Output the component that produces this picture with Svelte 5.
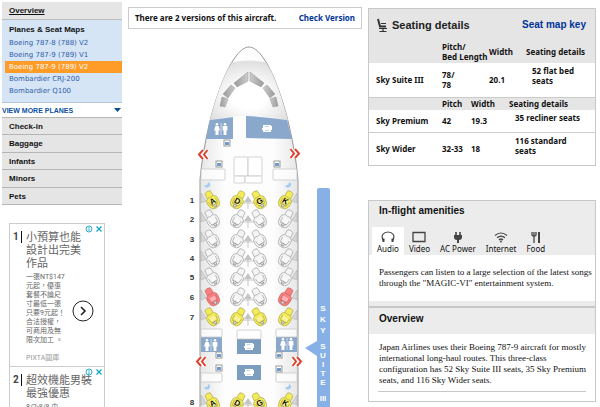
<script>
  const planes = [
    "Boeing 787-8 (788) V2",
    "Boeing 787-9 (789) V1",
    "Boeing 787-9 (789) V2",
    "Bombardier CRJ-200",
    "Bombardier Q100",
  ];
  let selectedPlane = $state(2);

  const links = ["Check-in", "Baggage", "Infants", "Minors", "Pets"];

  const tabs = ["Audio", "Video", "AC Power", "Internet", "Food"];
  let activeTab = $state("Audio");

  // seat colours: y = mixed, r = bad, w = standard
  const rows = [
    { n: 1, y: 200, seats: "yyyy", letters: true },
    { n: 2, y: 219, seats: "wwww" },
    { n: 3, y: 239, seats: "wwww" },
    { n: 4, y: 258, seats: "wwww" },
    { n: 5, y: 277, seats: "wwww" },
    { n: 6, y: 297, seats: "rwwr" },
    { n: 7, y: 317, seats: "yyyy" },
    { n: 8, y: 402, seats: "yyyy", letters: true },
  ];
  const columns = [
    { letter: "A", x: 212, flip: 1 },
    { letter: "D", x: 238, flip: -1 },
    { letter: "G", x: 259, flip: 1 },
    { letter: "K", x: 286, flip: -1 },
  ];

  const bassinets = [[224, 140], [216, 161], [274, 161], [216, 352], [276, 352], [216, 365], [276, 366]];
  const closets = [
    [201, 169, 24, 11], [273, 169, 24, 11],
    [234, 157, 14, 19], [248, 157, 14, 19], [234, 176, 11, 7], [245, 176, 17, 7],
    [201, 329, 21, 8], [276, 329, 21, 8], [237, 330, 24, 9],
    [201, 373, 21, 9], [276, 373, 21, 9],
  ];
  const crescents = [[204, 182], [285, 182], [204, 384], [285, 384]];
  const exits = [[198, 150, 1], [300, 149, -1], [196, 357, 1], [302, 357, -1]];
  const cabinLetters = [["S", 311], ["K", 322], ["Y", 333], ["S", 349], ["U", 358], ["I", 367], ["T", 376], ["E", 385], ["III", 401]];
</script>

{#snippet lavatory(x, y)}
  <g transform="translate({x} {y})" fill="#fff">
    <circle cx="3" cy="1.3" r="1.3" />
    <path d="M1.4 3h3.2L6 7.5H4.5V12h-3V7.5H0z" />
    <path d="M6.6 0h.9v12h-.9z" opacity=".6" />
    <circle cx="11" cy="1.3" r="1.3" />
    <path d="M8.6 3h4.8v4.5h-1V12H9.6V7.5h-1z" />
  </g>
{/snippet}

{#snippet galley(x, y)}
  <g transform="translate({x} {y})">
    <path d="M1 0h8v1h1v4H9v2H1V5H0V3h1z" fill="#fff" />
    <path d="M2.5 1.5h4M3 5.5h4" stroke="#9fb8d4" stroke-width=".6" />
  </g>
{/snippet}

{#snippet adIcons()}
  <svg class="ad-icons" viewBox="0 0 18 8" fill="none" stroke="#12a5c8" aria-hidden="true">
    <circle cx="4" cy="4" r="3" stroke-width=".9" />
    <path d="M4 3.4v2.4M4 2v.9" />
    <path d="M11.5 1.5l5 5M16.5 1.5l-5 5" stroke-width="1.3" />
  </svg>
{/snippet}

<div class="page">
  <aside>
    <nav>
      <a class="overview" href="#overview">Overview</a>
      <div class="planes">
        <h2>Planes & Seat Maps</h2>
        {#each planes as plane, i}
          <a
            href="#plane-{i}"
            class:selected={i === selectedPlane}
            onclick={() => (selectedPlane = i)}>{plane}</a>
        {/each}
      </div>
      <button class="more">
        VIEW MORE PLANES
        <svg viewBox="0 0 7 4" aria-hidden="true"><path d="M0 0h7L3.5 4z" fill="#0a4f8c" /></svg>
      </button>
      <div class="links">
        {#each links as link}
          <a href="#{link.toLowerCase()}">{link}</a>
        {/each}
      </div>
    </nav>

    <div class="ads">
      <article class="ad first">
        {@render adIcons()}
        <span class="num">1</span>
        <div class="copy">
          <h3>小預算也能<br />設計出完美<br />作品</h3>
          <p>一張NT$147<br />元起，優惠<br />套餐不論尺<br />寸最低一張<br />只要9元起！<br />合法授權，<br />可商用及無<br />限次加工 。</p>
          <small>PIXTA圖庫</small>
        </div>
        <button class="go" aria-label="PIXTA">
          <svg viewBox="0 0 22 22" fill="none" stroke="#222">
            <circle cx="11" cy="11" r="10" />
            <path d="M9 7l4 4-4 4" stroke-width="1.6" />
          </svg>
        </button>
      </article>
      <article class="ad">
        {@render adIcons()}
        <span class="num">2</span>
        <div class="copy">
          <h3>超效機能男裝<br />最強優惠</h3>
          <p>8/2-8/8 由</p>
        </div>
      </article>
    </div>
  </aside>

  <main>
    <div class="version">
      <span>There are 2 versions of this aircraft.</span>
      <a href="#version">Check Version</a>
    </div>

    <svg class="map" viewBox="128 40 234 367" role="img" aria-label="Seat map">
      <defs>
        <linearGradient id="hull">
          <stop offset="0" stop-color="#e6e6e6" />
          <stop offset=".25" stop-color="#fdfdfd" />
          <stop offset=".75" stop-color="#fdfdfd" />
          <stop offset="1" stop-color="#e6e6e6" />
        </linearGradient>
        <radialGradient id="nose" cx=".5" cy=".6" r=".62">
          <stop offset=".35" stop-color="#fff" />
          <stop offset="1" stop-color="#dedede" />
        </radialGradient>
        <linearGradient id="glass">
          <stop offset="0" stop-color="#999" />
          <stop offset="1" stop-color="#ccc" />
        </linearGradient>
      </defs>

      <path
        d="M200 410V180C201 165 206 135 212 113C218 92 226 70 234 59C240 50 245 47 249 47C253 47 258 50 264 59C272 70 280 92 286 113C292 135 297 165 298 180V410z"
        fill="url(#hull)" stroke="#999" />
      <path d="M210 120C217 94 225 72 232 63Q249 60 266 63C273 72 281 94 288 120Q249 112 210 120z" fill="url(#nose)" />
      <path d="M232 63Q249 59 266 63" fill="none" stroke="#ccc" stroke-width=".6" />
      {#each [1, -1] as side}
        <g transform="translate(249 0) scale({side} 1)" fill="url(#glass)" stroke="#999" stroke-width=".5">
          <path d="M-1 72v9l-11 6-3-4z" />
          <path d="M-18 85l4 3-7 10-5-4z" />
          <path d="M-27 97l6 2-3 8-5-1z" />
        </g>
      {/each}

      <g fill="#8aa8cc">
        <path d="M210 120l23-3v21.500q0 .5-1 .5h-26z" />
        <path d="M246 116q22 1 41 4l5 19-45-1q-1 0-1-1z" />
        <path d="M201 337h21v15h-21zM276 337h21v15h-21z" />
        <path d="M237 339h24v15h-24zM237 365h24v15h-24z" fill="#7c9cc0" />
      </g>
      {@render lavatory(214, 123)}
      {@render lavatory(204, 339)}
      {@render lavatory(280, 338)}
      {@render galley(262, 125)}
      {@render galley(244, 343)}
      {@render galley(244, 369)}

      {#each closets as [x, y, width, height]}
        <rect {x} {y} {width} {height} rx="1" fill="#fff" fill-opacity=".7" stroke="#c8c8c8" stroke-width=".8" />
      {/each}
      {#each bassinets as [x, y]}
        <rect {x} {y} width="6" height="6" fill="#fff" stroke="#999" />
        <rect x={x + 1} y={y + 2} width="4" height="3" fill="#6f9bcd" />
      {/each}
      {#each crescents as [x, y]}
        <path d="M{x + 4} {y}q4 2 1 5q-4 2-5-2q4 1 4-3z" fill="#a5cdf2" />
      {/each}
      {#each exits as [x, y, side]}
        <g transform="translate({x} {y}) scale({side} 1)" fill="none">
          <path d="M5 0L1 4.500l4 4.500M9.500 0L6 4.500l3.500 4.500" stroke="#fff" stroke-width="4" />
          <path d="M5 0L1 4.500l4 4.500M9.500 0L6 4.500l3.500 4.500" stroke="#dc4432" stroke-width="2" />
        </g>
      {/each}

      {#each rows as row}
        <text class="row" x="192" y={row.y + 3}>{row.n}</text>
        <g transform="translate(0 {row.y})" fill="#c4c4c4">
          <path d="M248 -4l4 6h-8z" />
          <path d="M201 -7l5 8-5 2zM297 -7l-5 8 5 2z" fill="#d6d6d6" stroke="#aaa" stroke-width=".5" />
          <path d="M240 3h16M248 2v7" stroke="#aaa" stroke-width=".6" />
        </g>
        {#each columns as col, i}
          <g transform="translate({col.x} {row.y})">
            <g class="seat {row.seats[i]}" transform="scale({col.flip} 1) rotate(-30)">
              <path d="M-3 -9q3-1.500 6 0l.5 6q3 1 2.500 5q0 5-3 6.500q-3 1-6 0q-3-1.500-3-6.500q-.5-4 2.500-5z" />
              <path d="M-3 -3.500q3 1 6 0M-4 0q0 5 1.500 6M4 0q0 5-1.500 6M-3 5q3 1.500 6 0" fill="none" />
              <path d="M-3 0h6v4h-6z" class="cushion" />
              <circle cx="0" cy="6.500" r="1.500" fill="#ddd" stroke="#777" />
            </g>
            {#if row.letters}
              <text class="letter" transform="rotate({col.flip * -30})" x="0" y="4">{col.letter}</text>
            {/if}
          </g>
        {/each}
      {/each}

      <path d="M317 410V190q0-2 2-2h9q2 0 2 2v220zM317 341v15l-12-8z" fill="#87b1e6" />
      {#each cabinLetters as [letter, y]}
        <text class="cabin" x="323" {y}>{letter}</text>
      {/each}
    </svg>
  </main>

  <section class="details">
    <div class="card seating">
      <header>
        <svg viewBox="0 0 12 16" fill="none" stroke="#333" aria-hidden="true">
          <path d="M2 2l2 7.500h6" stroke-width="2" />
          <path d="M5 6.500h5M3 11.500h8M7 11v3M3.500 14.500h7" stroke-width="1.200" />
        </svg>
        <h2>Seating details</h2>
        <a href="#key">Seat map key</a>
      </header>
      <table class="suite">
        <thead>
          <tr><th class="name"></th><th class="pitch">Pitch/<br />Bed Length</th><th class="width">Width</th><th>Seating details</th></tr>
        </thead>
        <tbody>
          <tr><td>Sky Suite III</td><td>78/<br />78</td><td>20.1</td><td class="seats">52 flat bed<br />seats</td></tr>
        </tbody>
      </table>
      <table class="others">
        <thead>
          <tr><th class="name"></th><th class="pitch">Pitch</th><th class="width">Width</th><th>Seating details</th></tr>
        </thead>
        <tbody>
          <tr><td>Sky Premium</td><td>42</td><td>19.3</td><td class="seats">35 recliner seats</td></tr>
          <tr><td>Sky Wider</td><td>32-33</td><td>18</td><td class="seats">116 standard<br />seats</td></tr>
        </tbody>
      </table>
    </div>

    <div class="card amenities">
      <h2>In-flight amenities</h2>
      <div class="tabs" role="tablist">
        {#each tabs as tab}
          <button role="tab" aria-selected={tab === activeTab} class:active={tab === activeTab} onclick={() => (activeTab = tab)}>
            <svg viewBox="0 0 16 12" fill="none" stroke="#444" aria-hidden="true">
              {#if tab === "Audio"}
                <path d="M3.500 10C0 4 4 1 8 1s8 3 4.500 9" stroke-width="1.200" />
                <path d="M3.500 7.500v3.500M12.500 7.500v3.500" stroke-width="2" />
              {:else if tab === "Video"}
                <path d="M2 1.500h12v9H2z" stroke-width="1.300" />
              {:else if tab === "AC Power"}
                <path d="M4 4h8v2q0 3-3 3v3H7V9q-3 0-3-3z" fill="#444" stroke="none" />
                <path d="M6 1v4M10 1v4" stroke-width="1.600" />
              {:else if tab === "Internet"}
                <path d="M2 4.500q6-5 12 0M4 6.800q4-3.500 8 0M6 9q2-2 4 0" stroke-width="1.200" />
                <circle cx="8" cy="10.500" r="1" fill="#444" stroke="none" />
              {:else}
                <path d="M6 1v11M4 1v3q0 1 2 1t2-1V1" stroke-width="1.300" />
                <path d="M11 12V1" stroke-width="2" />
              {/if}
            </svg>
            {tab}
          </button>
        {/each}
      </div>
      <p>Passengers can listen to a large selection of the latest songs<br />through the "MAGIC-VI" entertainment system.</p>
    </div>

    <div class="card about">
      <h2>Overview</h2>
      <p>Japan Airlines uses their Boeing 787-9 aircraft for mostly<br />international long-haul routes. This three-class<br />configuration has 52 Sky Suite III seats, 35 Sky Premium<br />seats, and 116 Sky Wider seats.</p>
      <hr />
    </div>
  </section>
</div>

<style>
  :global(body) {
    background: #fff;
  }

  .page {
    display: grid;
    grid-template-columns: 120px 1fr 228px;
    gap: 6px;
    height: 100vh;
    padding: 0 4px 0 2px;
    box-sizing: border-box;
    overflow: hidden;
    font-family: "Liberation Sans", Arial, sans-serif;
    color: #111;
  }

  h2, h3, p {
    margin: 0;
  }

  a {
    color: #003399;
    text-decoration: none;
  }

  button {
    margin: 0;
    padding: 0;
    border: 0;
    background: none;
    font: inherit;
    color: inherit;
    cursor: pointer;
  }

  /* left menu */
  nav {
    padding-top: 2px;
  }
  nav .overview {
    display: block;
    padding-left: 7px;
    border-bottom: 1px solid #bbb;
    background: #e5e5e5;
    font-size: 8px;
    line-height: 17px;
    font-weight: bold;
    color: #111;
    text-decoration: underline;
  }
  .planes {
    padding: 3px 0 5px 3px;
    background: #d5e5f6;
    border-bottom: 1px solid #b5c5d5;
  }
  .planes h2 {
    padding-left: 4px;
    font-size: 8px;
    line-height: 14px;
  }
  .planes a {
    display: block;
    padding-left: 4px;
    font-family: "DejaVu Sans", Verdana, sans-serif;
    font-size: 7px;
    line-height: 12px;
    color: #3060a8;
  }
  .planes a.selected {
    background: #ff9b27;
    color: #fff;
  }
  .more {
    display: flex;
    justify-content: space-between;
    align-items: center;
    width: 100%;
    height: 14px;
    padding-right: 1px;
    font-size: 7px;
    font-weight: bold;
    color: #0a4fa0;
  }
  .more svg {
    width: 7px;
    height: 4px;
  }
  .links {
    display: flex;
    flex-direction: column;
    height: 87px;
    border-bottom: 1px solid #b5b5b5;
  }
  .links a {
    flex: 1 1 0;
    min-height: 0;
    padding-left: 7px;
    border-top: 1px solid #b5b5b5;
    background: #e5e5e5;
    font-size: 8px;
    line-height: 18px;
    font-weight: bold;
    color: #111;
  }

  /* ads */
  .ads {
    width: 96px;
    margin: 18px 0 0 7px;
    box-sizing: border-box;
    border: 1px solid #ccc;
    font-family: Roboto, "Noto Sans CJK TC", sans-serif;
    color: #666;
  }
  .ad {
    position: relative;
    display: flex;
    gap: 4px;
    padding: 7px 2px 0 3px;
    border-top: 1px solid #ccc;
  }
  .ad.first {
    height: 135px;
    border-top: 0;
  }
  .num {
    width: 8px;
    height: 12px;
    border-right: 1px solid #111;
    font-size: 10px;
    line-height: 12px;
    font-weight: bold;
    color: #444;
  }
  .ad h3 {
    font-size: 11px;
    line-height: 13px;
    font-weight: normal;
    white-space: nowrap;
  }
  .ad p {
    margin-top: 3px;
    font-size: 7px;
    line-height: 9px;
    white-space: nowrap;
  }
  .ad small {
    display: block;
    margin-top: 8px;
    font-size: 7px;
    line-height: 10px;
    color: #999;
  }
  .ad-icons {
    position: absolute;
    top: 1px;
    right: 1px;
    width: 18px;
    height: 8px;
  }
  .go {
    position: absolute;
    top: 76px;
    right: 10px;
    width: 22px;
    height: 22px;
  }
  .go svg {
    display: block;
  }

  /* seat map */
  .version {
    display: flex;
    justify-content: space-between;
    margin: 7px 0 11px;
    padding: 0 6px;
    border: 1px solid #ccc;
    font-family: "Noto Sans", "Open Sans", sans-serif;
    font-size: 8px;
    line-height: 20px;
    font-weight: bold;
    white-space: nowrap;
  }
  .map {
    display: block;
    width: 100%;
  }
  .map text {
    text-anchor: middle;
    font-weight: bold;
  }
  .row {
    font-size: 8px;
    fill: #333;
  }
  .letter {
    font-size: 8px;
    fill: #111;
  }
  .cabin {
    font-size: 8px;
    fill: #fff;
  }
  .seat {
    stroke-width: 0.6;
    stroke: #999;
    fill: #f4f4f4;
  }
  .seat.y {
    fill: #f3eb58;
    stroke: #a8a04a;
  }
  .seat.r {
    fill: #f98080;
    stroke: #c06060;
  }
  .seat .cushion {
    fill: #fff;
    fill-opacity: 0.4;
    stroke: none;
  }

  /* right column */
  .card {
    border: 1px solid #c8c8c8;
    background: #fff;
  }
  .seating {
    margin-top: 8px;
    font-family: "Noto Sans", "Open Sans", sans-serif;
  }
  .seating header {
    display: flex;
    align-items: center;
    height: 31px;
    padding: 0 9px 0 7px;
    background: #e5e5e5;
    font-family: "Liberation Sans", Arial, sans-serif;
  }
  .seating header svg {
    width: 12px;
    height: 16px;
    margin-right: 4px;
  }
  .seating h2 {
    flex: 1;
    font-size: 11px;
    color: #222;
  }
  .seating header a {
    font-size: 10px;
    font-weight: bold;
  }
  table {
    width: 100%;
    border-collapse: separate;
    border-spacing: 0;
    table-layout: fixed;
    font-size: 8px;
    line-height: 10px;
    font-weight: bold;
    white-space: nowrap;
  }
  th, td {
    box-sizing: border-box;
    padding: 0;
    text-align: left;
  }
  thead {
    background: #e5e5e5;
  }
  td:first-child {
    padding-left: 7px;
  }
  .name {
    width: 73px;
  }
  .suite .pitch {
    width: 47px;
  }
  .suite .width {
    width: 37px;
  }
  .suite th {
    height: 23px;
  }
  .suite td {
    height: 34px;
  }
  .suite .seats {
    padding: 0 0 8px 6px;
  }
  .others .pitch {
    width: 29px;
  }
  .others .width {
    width: 38px;
  }
  .others th {
    height: 13px;
    border-top: 1px solid #ccc;
  }
  .others td {
    height: 23px;
    border-bottom: 1px solid #ccc;
  }
  .others tr:last-child td {
    height: 32px;
    border-bottom: 0;
  }
  .others .seats {
    padding: 0 0 6px 6px;
  }

  .amenities {
    margin-top: 34px;
    padding: 0 3px 5px;
    background: #ececec;
  }
  .amenities h2, .about h2 {
    padding-left: 7px;
    font-size: 10px;
    line-height: 20px;
  }
  .tabs {
    display: flex;
    margin-top: 6px;
    font-family: "Noto Sans", "Open Sans", sans-serif;
    font-size: 8px;
    line-height: 10px;
  }
  .tabs button {
    display: flex;
    flex-direction: column;
    align-items: center;
    gap: 1px;
    padding: 4px 5px 1px;
  }
  .tabs .active {
    background: #fff;
  }
  .tabs svg {
    width: 16px;
    height: 12px;
  }
  .card p {
    font-family: "Liberation Serif", Georgia, serif;
    font-size: 9px;
    line-height: 11px;
  }
  .amenities p {
    margin: 0 -3px;
    padding: 12px 0 12px 10px;
    background: #fff;
  }
  .about {
    padding-bottom: 9px;
  }
  .about h2 {
    padding: 0 0 4px 10px;
    background: #ececec;
    line-height: 22px;
  }
  .about p {
    padding: 8px 0 0 10px;
  }
  .about hr {
    height: 1px;
    margin: 5px 9px 0;
    border: 0;
    background: #c8c8c8;
  }
</style>
